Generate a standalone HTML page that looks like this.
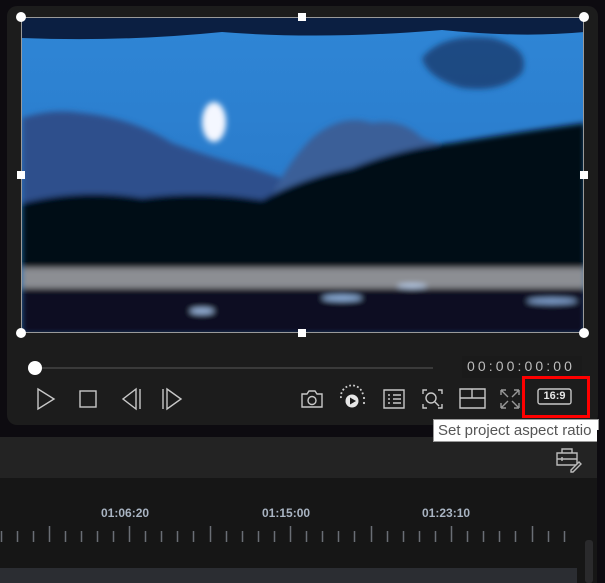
<!DOCTYPE html>
<html><head><meta charset="utf-8"><style>
*{margin:0;padding:0;box-sizing:border-box}
body{width:605px;height:583px;background:#0d0b10;position:relative;overflow:hidden;font-family:"Liberation Sans",sans-serif}
.abs{position:absolute}
#panel{left:7px;top:6px;width:591px;height:419px;background:#1c1c1c;border-radius:10px}
#video{left:21px;top:17px;width:563px;height:316px;overflow:hidden;border:1px solid #9a9a9a;background:#2b7ccc}
.h{position:absolute;width:8px;height:8px;background:#fff}
.c{border-radius:50%;width:10px;height:10px}
svg{position:absolute;overflow:visible}
.ic{stroke:#c8c8c8;fill:none;stroke-width:1.4}
</style></head><body>
<div id="panel" class="abs"></div>
<div id="video" class="abs">
<svg width="563" height="316" style="left:0;top:0">
 <defs>
  <linearGradient id="sky" x1="0" y1="0" x2="0" y2="1">
   <stop offset="0" stop-color="#2f86d6"/><stop offset="0.5" stop-color="#2a7ccc"/><stop offset="1" stop-color="#1f64ad"/>
  </linearGradient>
  <filter id="bl"><feGaussianBlur stdDeviation="3"/></filter>
 </defs>
 <rect width="563" height="316" fill="url(#sky)"/>
 <path d="M0 0 H563 V14 Q500 20 420 12 Q300 22 200 14 Q100 24 0 20 Z" fill="#0b1f42"/>
 <g filter="url(#bl)">
  <path d="M0 100 Q30 90 60 95 Q110 100 150 125 Q190 140 230 150 Q260 160 290 170 L290 200 L0 200 Z" fill="#2d4f8c"/>
  <path d="M240 200 Q260 150 290 120 Q320 95 350 105 Q380 100 400 120 Q430 130 460 140 L563 130 L563 200 Z" fill="#3b5e98"/>
  <path d="M400 40 Q420 15 470 20 Q510 30 500 55 Q480 75 440 70 Q405 60 400 40 Z" fill="#1a3c6e" opacity="0.8"/>
  <path d="M0 185 Q60 170 120 180 Q180 172 240 182 Q280 160 330 150 Q380 130 430 125 Q490 115 563 105 L563 252 L0 252 Z" fill="#050b18"/>
  <path d="M0 250 H563 V270 H0 Z" fill="#8c8e93"/>
  <path d="M0 270 H563 V316 H0 Z" fill="#070f20"/>
  <ellipse cx="192" cy="104" rx="12" ry="20" fill="#f4f7ff"/>
  <ellipse cx="320" cy="280" rx="20" ry="3" fill="#8fb1dd"/>
  <ellipse cx="180" cy="293" rx="12" ry="3" fill="#9ab6dd"/>
  <ellipse cx="390" cy="268" rx="15" ry="2.5" fill="#b8cbe6"/>
  <ellipse cx="530" cy="283" rx="25" ry="3" fill="#7f9fcc"/>
 </g>
</svg>
</div>
<div class="h c" style="left:16px;top:12px"></div>
<div class="h" style="left:298px;top:13px"></div>
<div class="h c" style="left:579px;top:12px"></div>
<div class="h" style="left:17px;top:171px"></div>
<div class="h" style="left:580px;top:171px"></div>
<div class="h c" style="left:16px;top:328px"></div>
<div class="h" style="left:298px;top:329px"></div>
<div class="h c" style="left:579px;top:328px"></div>
<!-- slider -->
<div class="abs" style="left:35px;top:367px;width:398px;height:2px;background:#3a3a3a"></div>
<div class="abs" style="left:28px;top:361px;width:14px;height:14px;border-radius:50%;background:#fff"></div>
<div class="abs" style="left:462px;top:356px;width:120px;height:22px;background:#1a1a1a"></div>
<div class="abs" style="left:467px;top:358px;color:#bdbdbd;font-size:14px;letter-spacing:3.1px;white-space:nowrap">00:00:00:00</div>
<!-- controls -->
<svg style="left:0;top:0" width="605" height="583">
 <g class="ic">
  <path d="M38 389 L54 399 L38 409 Z"/>
  <rect x="80" y="391" width="16" height="16"/>
  <path d="M140 389 L140 409 M136 389 L123 399 L136 409 Z"/>
  <path d="M163 389 L163 409 M167 389 L181 399 L167 409 Z"/>
  <path d="M302 394 h5 l2-3 h6 l2 3 h5 v13 h-20 Z"/><circle cx="312" cy="400.5" r="4"/>
  <path d="M384 390 h20 v18 h-20 Z M388 395 h2 M393 395 h8 M388 399 h2 M393 399 h8 M388 403 h2 M393 403 h8"/>
  <path d="M423 394 v-4 h4 M438 390 h4 v4 M423 404 v4 h4 M438 408 h4 v-4"/><circle cx="431" cy="398" r="5"/><path d="M435 402 l4 4"/>
  <path d="M460 389 h25 v19 h-25 Z M460 398 h25 M472 389 v9"/>
  <path d="M501 390 l7 7 M501 390 h5 M501 390 v5 M519 390 l-7 7 M519 390 h-5 M519 390 v5 M501 408 l7-7 M501 408 h5 M501 408 v-5 M519 408 l-7-7 M519 408 h-5 M519 408 v-5" stroke="#999"/>
  <rect x="538" y="389" width="33" height="15" rx="2"/>
 </g>
 <circle cx="352" cy="401" r="6.5" fill="#e6e6e6"/><path d="M350 397.5 L356 401 L350 404.5 Z" fill="#1c1c1c"/>
 <g stroke="#cfcfcf" stroke-width="1.8" stroke-dasharray="1.8 2.2" fill="none"><path d="M341 398 A11 11 0 0 1 363 395"/></g>
 <circle cx="364" cy="398" r="1.1" fill="#ccc"/><circle cx="364" cy="403" r="1.1" fill="#ccc"/>
</svg>
<div class="abs" style="left:538px;top:389px;width:33px;height:15px;color:#e6e6e6;font-size:11px;font-weight:bold;text-align:center;line-height:15px">16:9</div>
<div class="abs" style="left:522px;top:376px;width:68px;height:42px;border:3px solid #f00"></div>
<!-- band -->
<div class="abs" style="left:0;top:437px;width:605px;height:41px;background:#232323"></div>
<div class="abs" style="left:0;top:478px;width:605px;height:105px;background:#161616"></div>
<svg style="left:0;top:0" width="605" height="583" class="ic">
 <path d="M557 453 h20 v12 h-20 Z M562 453 v-4 h10 v4 M557 459 h20 M562 457 v4" stroke="#bbb"/>
 <path d="M571 470 l8-8 l2 2 l-8 8 h-2 Z" stroke="#bbb" fill="#232323"/>
</svg>
<div class="abs" style="left:0;top:431px;width:605px;height:6px;background:#0d0b10"></div>
<div class="abs" style="left:433px;top:419px;width:166px;height:23px;background:#fff;border:1px solid #999;color:#555;font-size:15px;line-height:21px;padding-left:4px;white-space:nowrap">Set project aspect ratio</div>
<!-- timeline -->
<div class="abs" style="left:101px;top:506px;color:#a9b4c2;font-size:12px;font-weight:bold">01:06:20</div>
<div class="abs" style="left:262px;top:506px;color:#a9b4c2;font-size:12px;font-weight:bold">01:15:00</div>
<div class="abs" style="left:422px;top:506px;color:#a9b4c2;font-size:12px;font-weight:bold">01:23:10</div>
<div class="abs" style="left:0;top:568px;width:577px;height:15px;background:#2b2d32"></div>
<div class="abs" style="left:585px;top:540px;width:8px;height:43px;background:#2a2a2c;border-radius:3px"></div>
<div class="abs" style="left:597px;top:430px;width:8px;height:153px;background:#0d0b10"></div>
<svg style="left:0;top:0" width="605" height="583">
<g stroke="#6a6e75" stroke-width="1.5">
<path d="M1.5 531v11M17.5 531v11M33.5 531v11M49.5 526v16M65.5 531v11M81.5 531v11M97.5 531v11M113.5 531v11M129.5 526v16M145.5 531v11M161.5 531v11M177.5 531v11M193.5 531v11M210.5 526v16M226.5 531v11M242.5 531v11M258.5 531v11M274.5 531v11M290.5 526v16M306.5 531v11M322.5 531v11M338.5 531v11M354.5 531v11M371.5 526v16M387.5 531v11M403.5 531v11M419.5 531v11M435.5 531v11M451.5 526v16M467.5 531v11M483.5 531v11M499.5 531v11M515.5 531v11M532.5 526v16M548.5 531v11M564.5 531v11"/>
</g></svg>
</body></html>
